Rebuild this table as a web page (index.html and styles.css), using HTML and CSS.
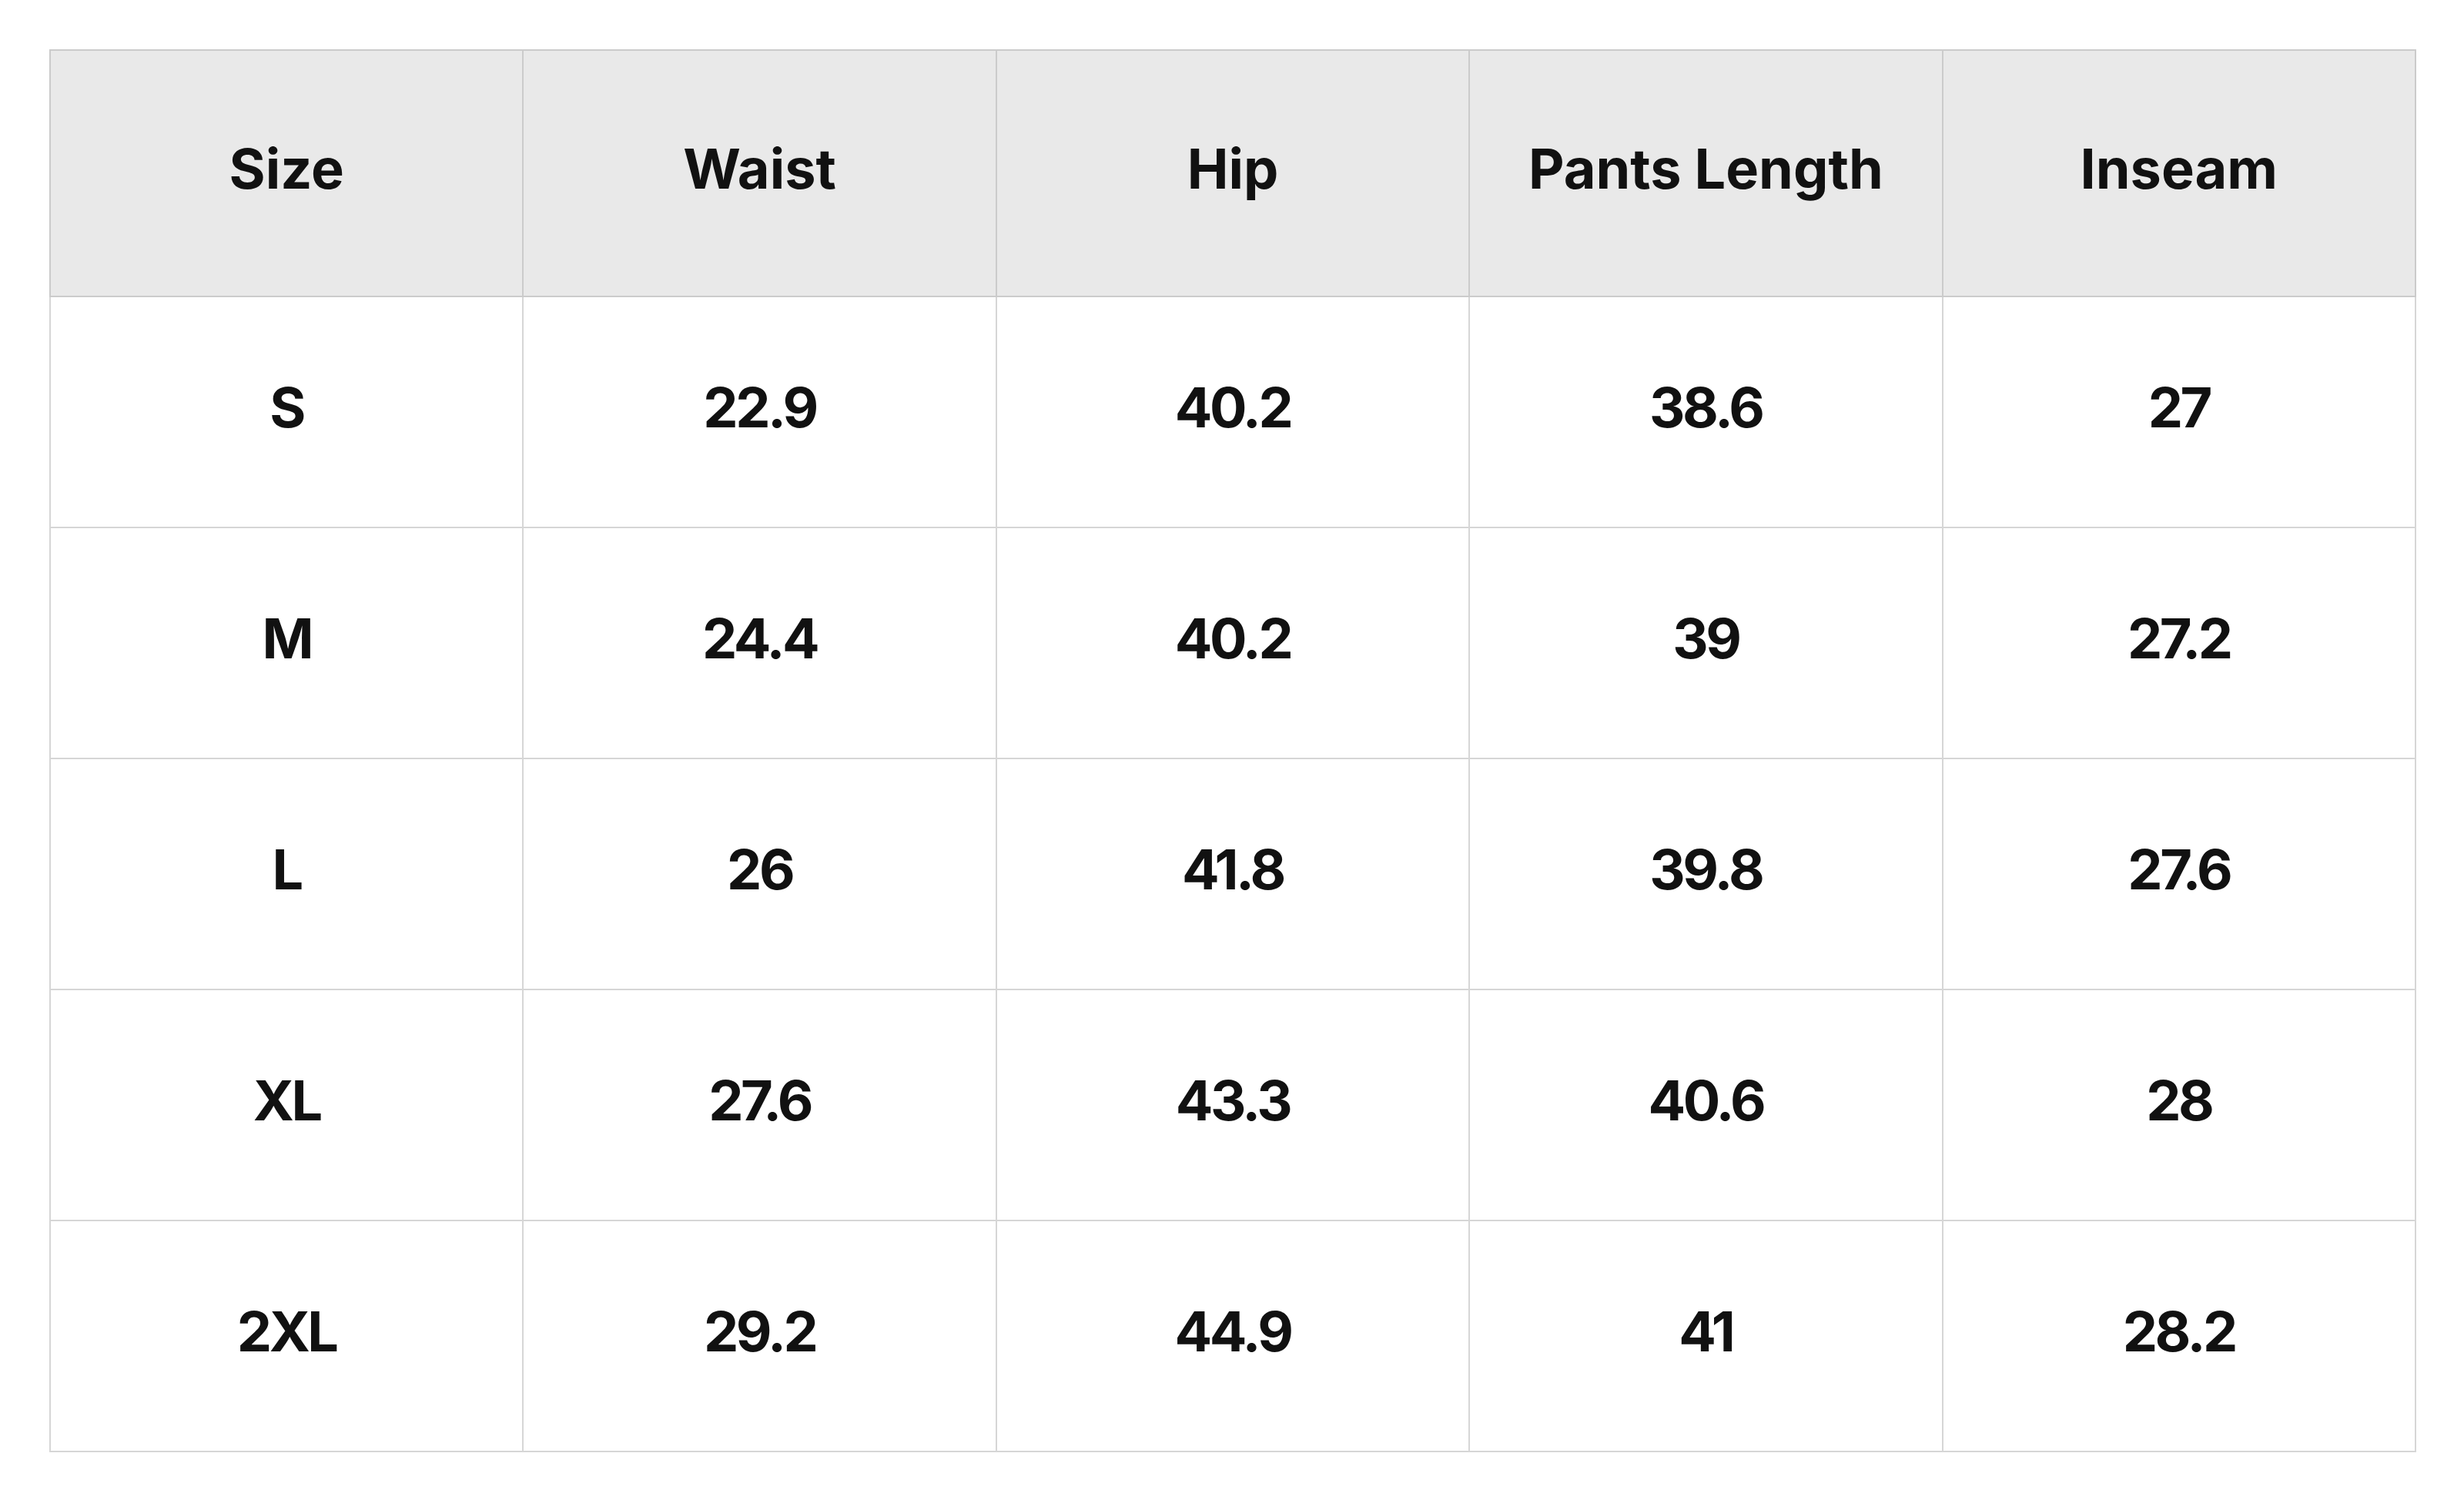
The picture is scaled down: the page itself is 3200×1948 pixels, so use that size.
FILE: index.html
```html
<!DOCTYPE html>
<html>
<head>
<meta charset="utf-8">
<link rel="stylesheet" href="styles.css">
</head>
<body>
<table class="size-table">
  <thead>
    <tr><th>Size</th><th>Waist</th><th>Hip</th><th>Pants Length</th><th>Inseam</th></tr>
  </thead>
  <tbody>
    <tr><td>S</td><td>22.9</td><td>40.2</td><td>38.6</td><td>27</td></tr>
    <tr><td>M</td><td>24.4</td><td>40.2</td><td>39</td><td>27.2</td></tr>
    <tr><td>L</td><td>26</td><td>41.8</td><td>39.8</td><td>27.6</td></tr>
    <tr><td>XL</td><td>27.6</td><td>43.3</td><td>40.6</td><td>28</td></tr>
    <tr><td>2XL</td><td>29.2</td><td>44.9</td><td>41</td><td>28.2</td></tr>
  </tbody>
</table>
</body>
</html>
```

FILE: styles.css
```css
html, body {
  margin: 0;
  padding: 0;
  background: #ffffff;
}
body {
  padding: 64px;
  font-family: Inter, "Noto Sans", sans-serif;
  color: #111111;
}
.size-table {
  width: 3074px;
  border-collapse: collapse;
  table-layout: fixed;
  border: 2px solid #c8c8c8;
}
.size-table th,
.size-table td {
  padding: 0;
  text-align: center;
  vertical-align: middle;
  font-size: 72px;
  line-height: 1;
  padding-bottom: 12px;
  box-sizing: border-box;
}
.size-table th {
  background: #e9e9e9;
  height: 320px;
  font-weight: 700;
  border: 2px solid #cbcbcb;
}
.size-table td {
  background: #ffffff;
  height: 300px;
  font-weight: 700;
  letter-spacing: -3.5px;
  border: 2px solid #d6d6d6;
}
```
